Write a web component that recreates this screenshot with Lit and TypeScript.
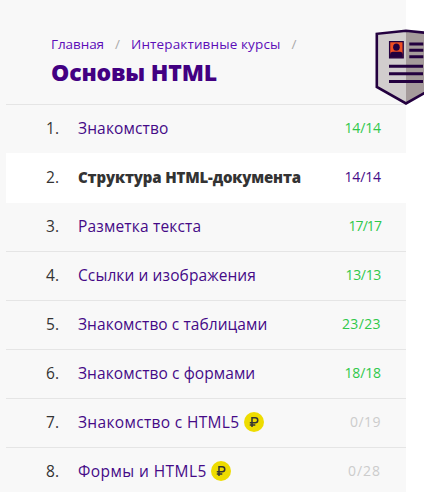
import { LitElement, html, css } from "lit";
import { customElement, property } from "lit/decorators.js";

/** Text run whose tracking is adjusted so that it takes up a given width. */
@customElement("tracked-text")
class TrackedText extends LitElement {
  @property() text = "";
  @property({ type: Number }) width = 0;

  static styles = css`
    :host { display: inline-block; white-space: nowrap; }
  `;

  updated() {
    this.style.letterSpacing = "0px";
    const natural = this.getBoundingClientRect().width;
    this.style.letterSpacing = `${(this.width - natural) / this.text.length}px`;
  }

  render() {
    return html`<span>${this.text}</span>`;
  }
}

interface Course {
  title: string;
  width: number;
  count: string;
  countWidth: number;
  state: "done" | "current" | "locked";
}

const courses: Course[] = [
  { title: "Знакомство", width: 90.5, count: "14/14", countWidth: 36.5, state: "done" },
  { title: "Структура HTML-документа", width: 223, count: "14/14", countWidth: 36.5, state: "current" },
  { title: "Разметка текста", width: 123.3, count: "17/17", countWidth: 32.5, state: "done" },
  { title: "Ссылки и изображения", width: 178, count: "13/13", countWidth: 35.5, state: "done" },
  { title: "Знакомство с таблицами", width: 189.4, count: "23/23", countWidth: 39, state: "done" },
  { title: "Знакомство с формами", width: 177.3, count: "18/18", countWidth: 36.5, state: "done" },
  { title: "Знакомство с HTML5", width: 161.5, count: "0/19", countWidth: 31, state: "locked" },
  { title: "Формы и HTML5", width: 128.7, count: "0/28", countWidth: 33, state: "locked" },
];

@customElement("app-root")
class AppRoot extends LitElement {
  static styles = css`
    :host {
      display: block;
      position: relative;
      width: 424px;
      height: 492px;
      overflow: hidden;
      background: #fff;
      font-family: "Open Sans", "Noto Sans", sans-serif;
      color: #333;
    }
    .panel {
      box-sizing: border-box;
      width: 406px;
      height: 492px;
      padding-left: 6px;
      background: #f8f8f8;
    }
    header {
      box-sizing: border-box;
      height: 104px;
      padding: 34px 0 0 45px;
    }
    nav {
      display: flex;
      height: 20px;
      line-height: 20px;
      font-size: 13.5px;
      color: #5c0db8;
    }
    .slash { color: #aaa; margin: 0 10px; width: 7px; text-align: center; }
    h1 {
      margin: 2px 0 0;
      font-size: 23px;
      line-height: 32px;
      font-weight: 800;
      color: #420082;
    }
    ol { list-style: none; margin: 0; padding: 0; }
    li {
      box-sizing: border-box;
      display: flex;
      align-items: center;
      height: 49px;
      padding: 0 25px 2px 40px;
      border-top: 1px solid #e5e5e5;
      font-size: 15.5px;
      line-height: 22px;
    }
    li.current {
      height: 50px;
      padding-bottom: 3px;
      border-color: #fff;
      background: #fff;
    }
    li.current + li { height: 48px; border-top: 0; }
    .number { width: 32px; }
    .title { color: #450a87; }
    .current .title { color: #333; font-size: 15px; font-weight: 800; }
    .count { margin-left: auto; font-size: 14px; color: #2fc84a; }
    .current .count { color: #450a87; }
    .locked .count { color: #ccc; }
    .paid {
      display: flex;
      width: 20px;
      height: 20px;
      margin-left: 4.5px;
      border-radius: 50%;
      background: #eedc00;
      align-items: center;
      justify-content: center;
    }
    .badge { position: absolute; left: 374px; top: 28px; }
  `;

  render() {
    return html`
      <div class="panel">
        <header>
          <nav>
            <tracked-text text="Главная" width="53"></tracked-text>
            <span class="slash">/</span>
            <tracked-text text="Интерактивные курсы" width="149.5"></tracked-text>
            <span class="slash">/</span>
          </nav>
          <h1><tracked-text text="Основы HTML" width="166"></tracked-text></h1>
        </header>
        <ol>
          ${courses.map(
            (c, i) => html`<li class=${c.state}>
              <span class="number">${i + 1}.</span>
              <tracked-text class="title" text=${c.title} width=${c.width}></tracked-text>
              ${c.state === "locked"
                ? html`<span class="paid">
                    <svg width="20" height="20" viewBox="0 0 20 20" fill="none" stroke="#333" stroke-width="1.5">
                      <path d="M8 15V5.7h3.2a2.5 2.5 0 0 1 0 5.1H5.8M5.8 13.1h5.5" />
                    </svg>
                  </span>`
                : ""}
              <tracked-text class="count" text=${c.count} width=${c.countWidth}></tracked-text>
            </li>`
          )}
        </ol>
      </div>
      <svg class="badge" width="64" height="80" viewBox="0 0 64 80">
        <path d="M32 2.8 2.8 5.8V59L32 76z" fill="#d1cdcd" />
        <path d="M32 2.8l29.2 3V59L32 76z" fill="#a59b9b" />
        <path d="M32 2.8 2.8 5.8V59L32 75.4 61.2 59V5.8z" fill="none" stroke="#23003f" stroke-width="2.6" />
        <path d="M15.6 13.6h13.6v16.2H15.6z" fill="#f04e23" stroke="#23003f" stroke-width="1.3" />
        <ellipse cx="22.4" cy="19.2" rx="3.3" ry="3.6" fill="#23003f" />
        <path d="M16 29.8v-3.4q0-2.4 2.6-2.6h7.6q2.6.2 2.6 2.6v3.4z" fill="#23003f" />
        <path
          d="M35.3 15.9h14M35.3 22.3h14M35.3 28.8h14M15 38.3h34M15 45.7h34M15 53.6h34"
          stroke="#23003f"
          stroke-width="3"
        />
      </svg>
    `;
  }
}
